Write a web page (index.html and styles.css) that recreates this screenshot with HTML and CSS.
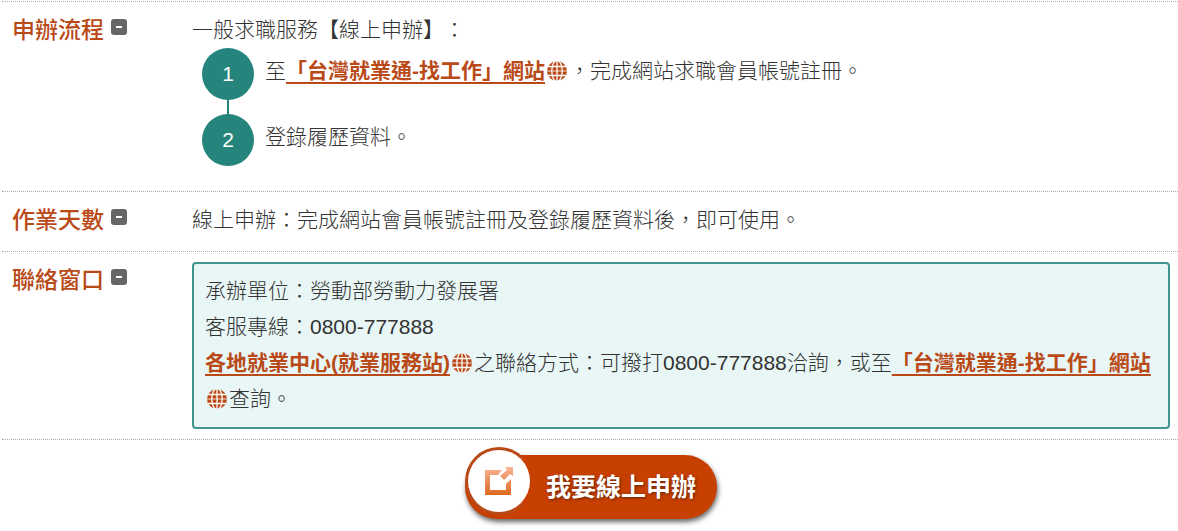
FILE: index.html
```
<!DOCTYPE html>
<html lang="zh-Hant">
<head>
  <meta charset="UTF-8" />
  <meta name="viewport" content="width=device-width, initial-scale=1.0"/>
  <title>一般求職服務</title>
  <link rel="stylesheet" href="styles.css">
</head>
<body>

  <!-- shared globe icon -->
  <svg class="defs" width="0" height="0" aria-hidden="true">
    <symbol id="globe" viewBox="0 0 20 20">
      <circle cx="10" cy="10" r="10" fill="#b94a18"/>
      <g fill="none" stroke="#fff" stroke-width="1.3">
        <path d="M10 0V20M1 5.5H19M1 14.5H19"/>
        <path d="M0 10H20" stroke-width="0.8"/>
        <ellipse cx="10" cy="10" rx="5.2" ry="10.6"/>
      </g>
    </symbol>
  </svg>

  <main>
    <section class="row">
      <h2>申辦流程<button class="toggle" type="button" aria-label="收合申辦流程"></button></h2>
      <div class="content">
        <p>一般求職服務【線上申辦】：</p>
        <ol class="steps">
          <li><span class="num">1</span><p>至<a href="#">「台灣就業通-找工作」網站</a><svg class="globe"><use href="#globe"/></svg>，完成網站求職會員帳號註冊。</p></li>
          <li><span class="num">2</span><p>登錄履歷資料。</p></li>
        </ol>
      </div>
    </section>

    <section class="row">
      <h2>作業天數<button class="toggle" type="button" aria-label="收合作業天數"></button></h2>
      <div class="content">
        <p>線上申辦：完成網站會員帳號註冊及登錄履歷資料後，即可使用。</p>
      </div>
    </section>

    <section class="row">
      <h2>聯絡窗口<button class="toggle" type="button" aria-label="收合聯絡窗口"></button></h2>
      <div class="content box">
        <p>承辦單位：勞動部勞動力發展署</p>
        <p>客服專線：0800-777888</p>
        <p><a href="#">各地就業中心(就業服務站)</a><svg class="globe"><use href="#globe"/></svg>之聯絡方式：可撥打0800-777888洽詢，或至<a href="#">「台灣就業通-找工作」網站</a><svg class="globe"><use href="#globe"/></svg>查詢。</p>
      </div>
    </section>
  </main>

  <div class="apply">
    <button class="apply-btn" type="button">
      <span class="apply-icon">
        <svg width="30" height="30" viewBox="0 0 30 30">
          <defs>
            <linearGradient id="g" x1="0" y1="0" x2="0" y2="1">
              <stop offset="0" stop-color="#f9b595"/>
              <stop offset="1" stop-color="#dc6a20"/>
            </linearGradient>
          </defs>
          <path fill="url(#g)" d="M1 4H18L14 9H6V24H22V18L27 13V29H1ZM21 1H29V10L26 8L20 14L16 10L23 4Z"/>
        </svg>
      </span>
      <span class="apply-text">我要線上申辦</span>
    </button>
  </div>

</body>
</html>
```
FILE: styles.css
```
body {
  margin: 0;
  padding: 1px 0 0 2px;
  font-family: "Liberation Sans", "Noto Sans CJK TC", sans-serif;
  font-size: 21px;
  font-weight: 300;
  line-height: 36px;
  text-spacing-trim: space-all;
  color: #333;
  background: #fff;
}

.defs {
  position: absolute;
}

p {
  margin: 0;
}

main {
  border-bottom: 1px dotted #aaa;
}

.row {
  display: flex;
  border-top: 1px dotted #aaa;
  padding: 10px 8px 10px 10px;
}

h2 {
  display: flex;
  flex: none;
  width: 180px;
  margin: 0;
  font-size: 23px;
  font-weight: 500;
  color: #b94a18;
}

.toggle {
  width: 16px;
  height: 16px;
  margin: 7px 0 0 7px;
  padding: 0;
  border: none;
  border-radius: 3px;
  background: linear-gradient(#fff, #fff) center / 6px 2px no-repeat #666;
  cursor: pointer;
}

.content {
  flex: 1;
  min-height: 39px;
}

.content a {
  color: #b94a18;
  font-weight: bold;
  text-decoration: underline;
  text-decoration-thickness: 2px;
  text-underline-offset: 4px;
}

.globe {
  width: 20px;
  height: 20px;
  margin: 0 2px;
  vertical-align: -3px;
}

.steps {
  list-style: none;
  margin: 0 0 15px;
  padding: 0 0 0 10px;
}

.steps li {
  display: flex;
  gap: 11px;
  position: relative;
}

.steps li + li {
  margin-top: 14px;
}

/* line between the circles */
.steps li + li::before {
  content: "";
  position: absolute;
  left: 25px;
  top: -15px;
  width: 2px;
  height: 16px;
  background: #25857c;
}

.steps p {
  padding-top: 5px;
}

.num {
  flex: none;
  width: 52px;
  height: 52px;
  border-radius: 50%;
  background: #25857c;
  color: #fff;
  line-height: 52px;
  text-align: center;
}

.box {
  padding: 9px 11px 10px;
  border: 2px solid #40958f;
  border-radius: 4px;
  background: #e8f6f5;
}

.apply {
  display: flex;
  justify-content: center;
  padding: 15px 0 10px 2px;
}

.apply-btn {
  display: flex;
  align-items: center;
  height: 64px;
  padding: 0 21px 0 0;
  border: none;
  border-radius: 32px;
  background: #c84000;
  box-shadow: 1px 3px 5px rgba(0,0,0,0.6);
  color: #fff;
  font-family: inherit;
  font-size: 25px;
  font-weight: bold;
  cursor: pointer;
}

.apply-icon {
  display: flex;
  align-items: center;
  justify-content: center;
  width: 62px;
  height: 62px;
  margin: -8px 13px 4px 0;
  border: 3px solid #b94a18;
  border-right-color: #c84000;
  border-radius: 50%;
  background: #fff;
}

.apply-text {
  padding-bottom: 4px;
  text-shadow: 1px 1px 3px rgba(0,0,0,0.5);
}
```
